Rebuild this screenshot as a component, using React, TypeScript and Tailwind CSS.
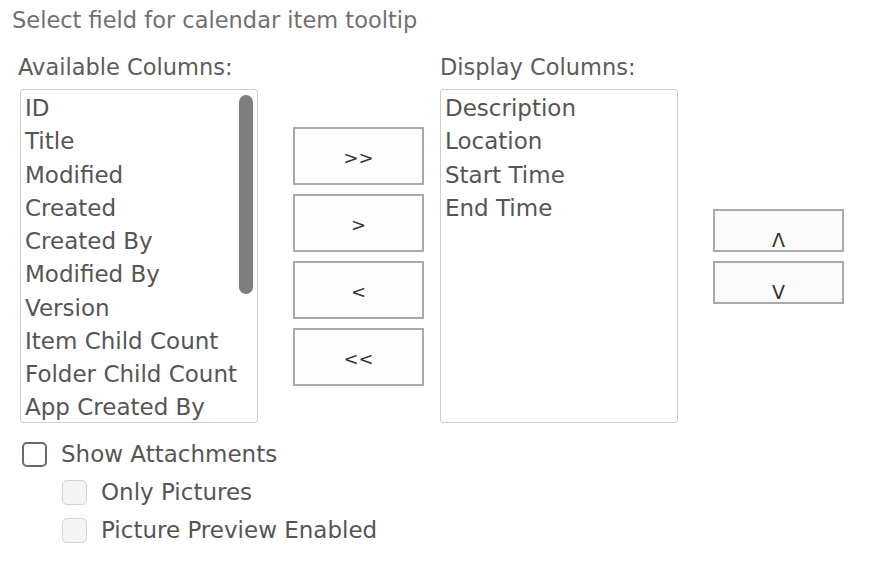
import { useState } from 'react';

const available = [
  'ID',
  'Title',
  'Modified',
  'Created',
  'Created By',
  'Modified By',
  'Version',
  'Item Child Count',
  'Folder Child Count',
  'App Created By',
];

const display = ['Description', 'Location', 'Start Time', 'End Time'];

function ListBox({ items, scroll }: { items: string[]; scroll?: boolean }) {
  return (
    <div className="relative h-[334px] w-[238px] overflow-hidden rounded-[3px] border border-[#cfcfcf] bg-white pl-[4px] pt-[2px]">
      {items.map(item => (
        <div key={item} className="whitespace-nowrap text-[23px] leading-[33.25px] text-[#555]">
          {item}
        </div>
      ))}
      {scroll && <div className="absolute left-[218px] top-[5px] h-[199px] w-[14px] rounded-full bg-[#7e7e7e]" />}
    </div>
  );
}

function MoveButton({ label }: { label: string }) {
  return (
    <button className="flex h-[58px] w-[131px] items-center justify-center border-2 border-[#a9a9a9] bg-[#fdfdfd] pt-[2px] text-[18px] text-[#333]">
      {label}
    </button>
  );
}

function OrderButton({ label }: { label: string }) {
  return (
    <button className="flex h-[43px] w-[131px] items-start justify-center border-2 border-[#a9a9a9] bg-[#fafafa] pt-[19px] text-[19px] leading-[20px] text-[#333]">
      {label}
    </button>
  );
}

function Check({ label, disabled, indent }: { label: string; disabled?: boolean; indent?: boolean }) {
  const [on, setOn] = useState(false);
  return (
    <label className={`flex h-[38px] items-center ${indent ? 'pl-[62px]' : 'pl-[22px]'}`}>
      <span
        onClick={() => !disabled && setOn(!on)}
        className={
          disabled
            ? 'h-[25px] w-[25px] rounded-[5px] border border-[#d4d4d4] bg-[#f4f4f4]'
            : 'h-[25px] w-[25px] rounded-[5px] border-2 border-[#6a6a6a] bg-white'
        }
      />
      <span className="ml-[14px] text-[23px] text-[#555]">{label}</span>
    </label>
  );
}

export default function App() {
  return (
    <div className="h-[566px] w-[880px] overflow-hidden bg-white font-['DejaVu_Sans',sans-serif]">
      <div className="ml-[12px] pt-[7px] text-[22.5px] leading-[26px] text-[#707070]">
        Select field for calendar item tooltip
      </div>

      <div className="mt-[20px] flex items-start">
        <div className="ml-[20px] w-[238px]">
          <div className="-ml-[2px] mb-[8px] whitespace-nowrap text-[22.5px] leading-[28px] text-[#5c5c5c]">
            Available Columns:
          </div>
          <ListBox items={available} scroll />
        </div>

        <div className="ml-[35px] mt-[74px] flex flex-col gap-[9px]">
          <MoveButton label=">>" />
          <MoveButton label=">" />
          <MoveButton label="<" />
          <MoveButton label="<<" />
        </div>

        <div className="ml-[16px] w-[238px]">
          <div className="mb-[8px] whitespace-nowrap text-[22.5px] leading-[28px] text-[#5c5c5c]">Display Columns:</div>
          <ListBox items={display} />
        </div>

        <div className="ml-[35px] mt-[156px] flex flex-col gap-[9px]">
          <OrderButton label="Λ" />
          <OrderButton label="V" />
        </div>
      </div>

      <div className="mt-[12px]">
        <Check label="Show Attachments" />
        <Check label="Only Pictures" disabled indent />
        <Check label="Picture Preview Enabled" disabled indent />
      </div>
    </div>
  );
}
